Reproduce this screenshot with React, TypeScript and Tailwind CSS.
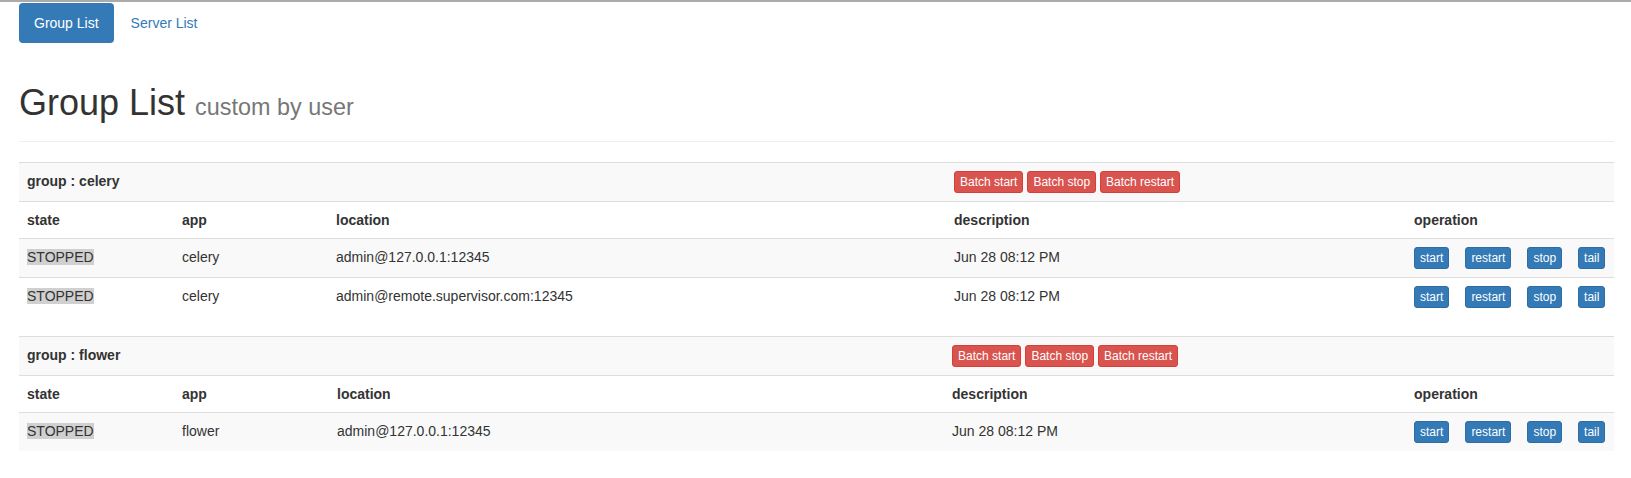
import React from "react";

type Proc = { state: string; app: string; location: string; description: string };

type Group = { name: string; widths: number[]; procs: Proc[] };

const groups: Group[] = [
  {
    name: "celery",
    widths: [155, 154, 618, 460, 208],
    procs: [
      { state: "STOPPED", app: "celery", location: "admin@127.0.0.1:12345", description: "Jun 28 08:12 PM" },
      { state: "STOPPED", app: "celery", location: "admin@remote.supervisor.com:12345", description: "Jun 28 08:12 PM" },
    ],
  },
  {
    name: "flower",
    widths: [155, 155, 615, 462, 208],
    procs: [
      { state: "STOPPED", app: "flower", location: "admin@127.0.0.1:12345", description: "Jun 28 08:12 PM" },
    ],
  },
];

function DangerBtn({ children }: { children: React.ReactNode }) {
  return (
    <button className="h-[22px] rounded-[3px] border border-[#d43f3a] bg-[#d9534f] px-[5px] text-[12px] leading-[18px] text-white">
      {children}
    </button>
  );
}

function PrimaryBtn({ children }: { children: React.ReactNode }) {
  return (
    <button className="h-[22px] rounded-[3px] border border-[#2e6da4] bg-[#337ab7] px-[5px] text-[12px] leading-[18px] text-white">
      {children}
    </button>
  );
}

function GroupTable({ group }: { group: Group }) {
  const td = "border-t border-[#ddd] p-[8px] align-top text-left";
  return (
    <table className="mb-[20px] w-full table-fixed border-collapse">
      <colgroup>
        {group.widths.map((w, i) => (
          <col key={i} style={{ width: w }} />
        ))}
      </colgroup>
      <tbody>
        <tr className="bg-[#f9f9f9]">
          <td colSpan={3} className={`${td} font-bold`}>
            group : {group.name}
          </td>
          <td className={td}>
            <div className="flex gap-[4px]">
              <DangerBtn>Batch start</DangerBtn>
              <DangerBtn>Batch stop</DangerBtn>
              <DangerBtn>Batch restart</DangerBtn>
            </div>
          </td>
          <td className={td}></td>
        </tr>
        <tr>
          <td className={`${td} font-bold`}>state</td>
          <td className={`${td} font-bold`}>app</td>
          <td className={`${td} font-bold`}>location</td>
          <td className={`${td} font-bold`}>description</td>
          <td className={`${td} font-bold`}>operation</td>
        </tr>
        {group.procs.map((p, i) => (
          <tr key={i} className={i % 2 === 0 ? "bg-[#f9f9f9]" : ""}>
            <td className={td}>
              <span className="bg-[#d0d0d0]">{p.state}</span>
            </td>
            <td className={td}>{p.app}</td>
            <td className={td}>{p.location}</td>
            <td className={td}>{p.description}</td>
            <td className={td}>
              <div className="flex gap-[16px]">
                <PrimaryBtn>start</PrimaryBtn>
                <PrimaryBtn>restart</PrimaryBtn>
                <PrimaryBtn>stop</PrimaryBtn>
                <PrimaryBtn>tail</PrimaryBtn>
              </div>
            </td>
          </tr>
        ))}
      </tbody>
    </table>
  );
}

export default function App() {
  return (
    <div className="min-h-[478px] bg-white font-['Liberation_Sans',Arial,sans-serif] text-[14px] leading-[20px] text-[#333]">
      <div className="h-[2px] bg-[#ababab]" />
      <div className="pl-[19px] pr-[17px]">
        <nav className="mt-[1px] flex gap-[2px]">
          <a className="rounded-[4px] bg-[#337ab7] px-[15px] py-[10px] text-white">Group List</a>
          <a className="rounded-[4px] px-[15px] py-[10px] text-[#337ab7]">Server List</a>
        </nav>
        <div className="mt-[40px] mb-[20px] border-b border-[#eee] pb-[8.4px]">
          <h1 className="mb-[10px] text-[36px] leading-[1.1] font-normal">
            Group List <small className="text-[65%] text-[#777]">custom by user</small>
          </h1>
        </div>
        {groups.map((g) => (
          <GroupTable key={g.name} group={g} />
        ))}
      </div>
    </div>
  );
}
